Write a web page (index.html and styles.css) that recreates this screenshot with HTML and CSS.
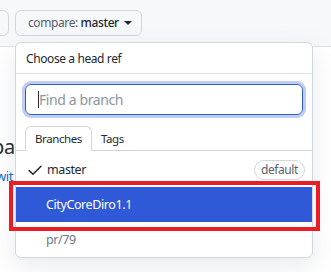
FILE: index.html
```html
<!DOCTYPE html>
<html>
<head>
<meta charset="utf-8">
<link rel="stylesheet" href="styles.css">
</head>
<body>
<div class="topbar">
  <div class="btn stub"></div>
  <div class="btn compare"><span class="lbl">compare: </span><span class="ref">master</span><span class="caret"></span></div>
</div>
<div class="page">
  <div class="title">ba</div>
  <a class="link">wit</a>
</div>

<div class="popover">
  <div class="pop-head">Choose a head ref</div>
  <div class="pop-search">
    <div class="input"><span class="cursor"></span><span class="ph">Find a branch</span></div>
  </div>
  <div class="tabs">
    <div class="tab active">Branches</div>
    <div class="tab">Tags</div>
  </div>
  <div class="items">
    <div class="item">
      <svg class="check" viewBox="0 0 16 16" width="16" height="16"><path d="M2.2 8.6 L6 12.3 L14 4.3" fill="none" stroke="#24292f" stroke-width="1.5" stroke-linecap="round" stroke-linejoin="round"/></svg>
      <span class="name">master</span>
      <span class="badge">default</span>
    </div>
    <div class="item selected"><span class="name">CityCoreDiro1.1</span></div>
    <div class="item muted"><span class="name">pr/79</span></div>
  </div>
</div>
<div class="highlight"></div>
</body>
</html>
```
FILE: styles.css
```css
html, body {
  margin: 0;
  padding: 0;
}
body {
  width: 331px;
  height: 272px;
  overflow: hidden;
  background: #ffffff;
  font-family: "Noto Sans", "Open Sans", sans-serif;
  letter-spacing: -0.4px;
  color: #24292f;
  position: relative;
}
.topbar {
  height: 47px;
  background: #f6f8fa;
  border-bottom: 1px solid #e1e4e8;
  display: flex;
  align-items: flex-start;
  padding-top: 10px;
  box-sizing: border-box;
  gap: 6px;
}
.btn {
  height: 26px;
  box-sizing: border-box;
  border: 1px solid #d0d7de;
  border-radius: 6px;
  background: #f6f8fa;
}
.stub {
  width: 20px;
  margin-left: -11px;
}
.compare {
  width: 127px;
  display: flex;
  align-items: center;
  padding-left: 12px;
  font-size: 12px;
  line-height: 1;
  white-space: pre;
}
.compare .lbl { color: #57606a; }
.compare .ref { color: #24292f; font-weight: 500; }
.caret {
  display: inline-block;
  margin-left: 5px;
  width: 0;
  height: 0;
  border-left: 4px solid transparent;
  border-right: 4px solid transparent;
  border-top: 4px solid #24292f;
}
.page {
  padding: 88px 0 0 0;
}
.title {
  font-size: 20px;
  margin-left: -8px;
  line-height: 24px;
  color: #24292f;
}
.link {
  display: block;
  margin-left: -4px;
  margin-top: 8px;
  font-size: 13px;
  color: #0969da;
}
.popover {
  position: absolute;
  left: 15px;
  top: 42px;
  width: 298px;
  height: 216px;
  box-sizing: border-box;
  background: #fff;
  border: 1px solid #d0d7de;
  border-radius: 6px;
  box-shadow: 0 8px 24px rgba(140,149,159,0.2);
  overflow: hidden;
  display: flex;
  flex-direction: column;
}
.pop-head {
  height: 32px;
  box-sizing: border-box;
  border-bottom: 1px solid #e1e4e8;
  display: flex;
  align-items: center;
  padding-left: 10px;
  font-size: 12px;
  font-weight: 400;
}
.pop-search {
  padding: 10px 9px 0 9px;
}
.input {
  height: 31px;
  box-sizing: border-box;
  border: 1.5px solid #2f5bd5;
  border-radius: 6px;
  box-shadow: 0 0 0 3px rgba(47,91,213,0.3);
  display: flex;
  align-items: center;
  padding-left: 12px;
  font-size: 14px;
}
.cursor {
  width: 1px;
  height: 17px;
  background: #24292f;
}
.ph { color: #8c959f; }
.tabs {
  margin-top: 11px;
  padding-left: 9px;
  display: flex;
  border-bottom: 1px solid #d0d7de;
  height: 24px;
  box-sizing: content-box;
}
.tab {
  font-size: 11.5px;
  padding: 0 9px;
  display: flex;
  align-items: center;
  color: #24292f;
  height: 24px;
}
.tab.active {
  border: 1px solid #d0d7de;
  border-bottom: 0;
  border-radius: 6px 6px 0 0;
  background: #fff;
  margin-bottom: -1px;
  height: 25px;
  padding-bottom: 1px;
  box-sizing: border-box;
}
.items {
  display: flex;
  flex-direction: column;
  padding-top: 1px;
}
.item {
  height: 35px;
  display: flex;
  align-items: center;
  padding: 0 7px 0 11px;
  font-size: 12.5px;
  gap: 4px;
}
.item .name { flex: 1; }
.check { flex: none; }
.badge {
  font-size: 12px;
  color: #57606a;
  border: 1px solid #d0d7de;
  border-radius: 10px;
  padding: 1px 6px;
  line-height: 16px;
}
.item.selected {
  background: #2f59d6;
  color: #fff;
  padding-left: 30px;
}
.item.muted {
  color: #6e7781;
  padding-left: 30px;
}
.highlight {
  position: absolute;
  left: 9px;
  top: 181px;
  width: 311px;
  height: 50px;
  box-sizing: border-box;
  border: 4px solid #ea1c24;
}
```
